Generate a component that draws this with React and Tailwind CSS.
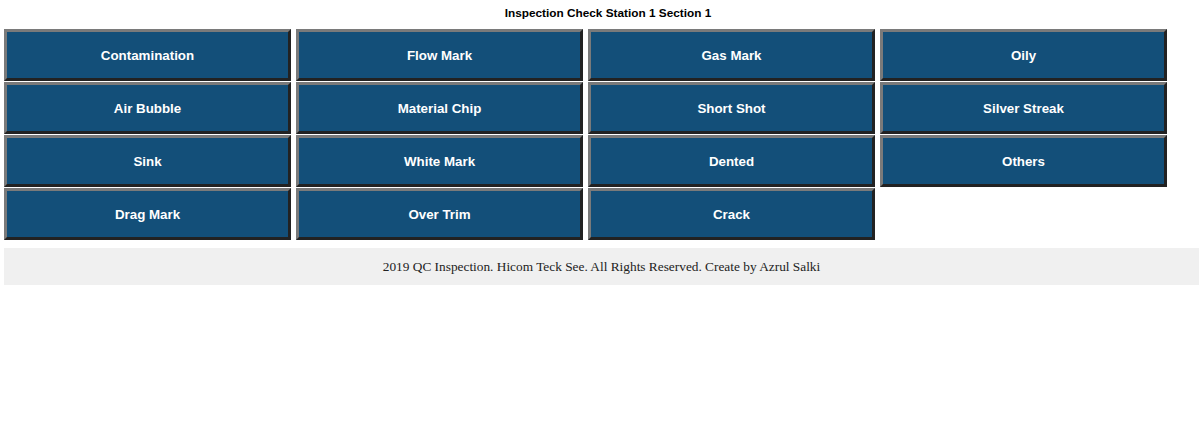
import React from "react";

const items = [
  "Contamination", "Flow Mark", "Gas Mark", "Oily",
  "Air Bubble", "Material Chip", "Short Shot", "Silver Streak",
  "Sink", "White Mark", "Dented", "Others",
  "Drag Mark", "Over Trim", "Crack",
];

export default function App() {
  return (
    <div className="w-[1199px] h-[427px] bg-white font-['Liberation_Sans',Arial,sans-serif]">
      <div className="pt-[6px] pl-[17px] text-center text-[11.8px] font-bold text-black leading-[14px]">
        Inspection Check Station 1 Section 1
      </div>
      <div className="pl-[4px] pt-[9px] grid grid-cols-[repeat(4,287px)] gap-x-[5px] gap-y-[1px]">
        {items.map((t) => (
          <div
            key={t}
            className="h-[52px] pt-[2px] flex items-center justify-center bg-[#134f79] text-white text-[13.33px] font-bold border-[3px] border-t-[#7a7a7a] border-l-[#7a7a7a] border-b-[#222] border-r-[#222]"
          >
            {t}
          </div>
        ))}
      </div>
      <div className="ml-[4px] mt-[8px] h-[37px] bg-[#f0f0f0] flex items-center justify-center text-[13.33px] text-[#222] font-['Liberation_Serif','Times_New_Roman',serif]">
        2019 QC Inspection. Hicom Teck See. All Rights Reserved. Create by Azrul Salki
      </div>
    </div>
  );
}
